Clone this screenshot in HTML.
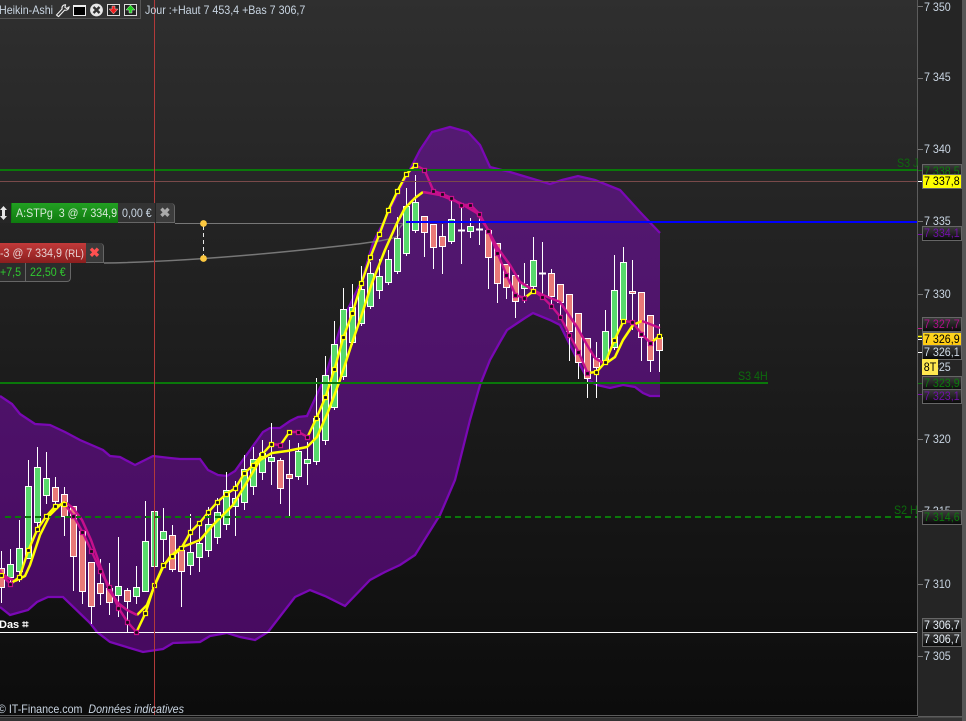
<!DOCTYPE html>
<html><head><meta charset="utf-8"><title>Chart</title>
<style>
html,body{margin:0;padding:0;background:#1a1a1a}
#p{position:relative;width:966px;height:721px;overflow:hidden;font:12px "Liberation Sans",sans-serif;color:#c9d5e2;
background:linear-gradient(#2f2f2f 0,#262626 170px,#1b1b1b 400px,#0c0c0c 715px)}
#p div{position:absolute;white-space:nowrap}
#p span{display:inline-block;transform:scaleX(.89);transform-origin:0 50%}
svg{position:absolute;left:0;top:0}
.ax{left:924px;height:14px;line-height:14px}
.b{left:922px;width:37px;height:13px;line-height:13px;border:1px solid #666;padding-left:1px;background:linear-gradient(#3c3c3c,#0a0a0a)}
</style></head><body><div id="p">

<svg width="966" height="721" viewBox="0 0 966 721">
<defs><linearGradient id="bf" x1="0" y1="0" x2="0" y2="1"><stop offset="0" stop-color="#541a72"/><stop offset="1" stop-color="#470a60"/></linearGradient></defs>

<path fill="url(#bf)" d="M0 396L12 404 20 414 35 424 50 425 65 432 80 440 103 450 110 456 120 457 135 465 147 459 153 456 170 458 180 459 200 459 208 470 218 475 227 476 235 471 263 432 270 428 280 428 290 421 298 417 307 416 325 377 343 319 362 280 373 243 403 183 420 150 432 132 450 127 468 132 480 145 490 167 510 172 530 178 550 184 562 180 578 176 595 180 620 190 640 212 660 233V396H650L643 393 635 387 623 385 610 388 597 385 588 380 580 365 560 325 550 320 533 313 525 318 507 330 500 342 490 360 480 385 470 420 455 480 440 515 415 555 400 565 385 572 370 580 345 606 325 596 310 590 295 597 268 632 255 640 240 637 227 633 210 636 200 642 173 643 163 649 143 652 110 642 97 632 90 623 63 597 48 597 37 602 28 610 10 615 0 607z"/>
<path fill="none" stroke="#7a08b4" stroke-width="2.3" d="M0 396L12 404 20 414 35 424 50 425 65 432 80 440 103 450 110 456 120 457 135 465 147 459 153 456 170 458 180 459 200 459 208 470 218 475 227 476 235 471 263 432 270 428 280 428 290 421 298 417 307 416 325 377 343 319 362 280 373 243 403 183 420 150 432 132 450 127 468 132 480 145 490 167 510 172 530 178 550 184 562 180 578 176 595 180 620 190 640 212 660 233"/>
<path fill="none" stroke="#7a08b4" stroke-width="2.3" d="M660 396H650L643 393 635 387 623 385 610 388 597 385 588 380 580 365 560 325 550 320 533 313 525 318 507 330 500 342 490 360 480 385 470 420 455 480 440 515 415 555 400 565 385 572 370 580 345 606 325 596 310 590 295 597 268 632 255 640 240 637 227 633 210 636 200 642 173 643 163 649 143 652 110 642 97 632 90 623 63 597 48 597 37 602 28 610 10 615 0 607"/>

<path fill="none" stroke="#777" stroke-width="1" d="M175 223.5H406"/>
<path fill="none" stroke="#777" stroke-width="1.5" d="M104 263C170 262 250 256 340 246S385 235 405 223"/>

<path fill="none" stroke="#fff" stroke-width="1" d="M1.5 551V603M10.5 549V582M19.5 520V582M28.5 460V559M37.5 447V527M46.5 452V504M55.5 477V507M64.5 487V536M73.5 506V591M82.5 531V604M91.5 562V624M100.5 559V605M109.5 563V615M118.5 537V617M127.5 588V633M136.5 566V604M145.5 501V592M154.5 494V570M163.5 508V562M172.5 525V572M181.5 550V607M190.5 514V575M199.5 525V572M208.5 507V557M217.5 498V544M226.5 472V530M235.5 481V536M244.5 455V510M253.5 447V495M262.5 440V480M271.5 423V485M280.5 458V504M289.5 440V517M298.5 443V480M307.5 442V485M316.5 378V465M325.5 356V445M334.5 321V410M343.5 288V380M352.5 284V345M361.5 266V326M370.5 262V309M379.5 259V299M388.5 250V285M397.5 217V274M406.5 188V256M415.5 175V233M424.5 216V257M433.5 224V269M442.5 224V274M451.5 200V244M461.5 208V264M470.5 218V238M479.5 217V245M488.5 230V289M497.5 243V303M506.5 264V299M515.5 275V318M524.5 263V303M533.5 237V290M542.5 242V297M551.5 269V305M560.5 284V320M569.5 294V361M578.5 313V379M587.5 338V398M596.5 342V398M605.5 310V364M614.5 255V350M623.5 247V322M632.5 260V330M641.5 292V361M650.5 315V372M659.5 324V372"/>
<path fill="none" stroke="#fff" stroke-width="2" d="M458 230.5h7M476 229.5h7M539 273.5h7"/>

<path fill="#58d96c" stroke="#fff" stroke-width="1" d="M7.5 564.5h6v13h-6zM16.5 548.5h6v23h-6zM25.5 486.5h6v72h-6zM34.5 467.5h6v55h-6zM43.5 478.5h6v17h-6zM115.5 586.5h6v9h-6zM133.5 587.5h6v9h-6zM142.5 541.5h6v50h-6zM151.5 511.5h6v55h-6zM160.5 531.5h6v8h-6zM187.5 552.5h6v13h-6zM196.5 543.5h6v14h-6zM205.5 524.5h6v26h-6zM214.5 512.5h6v25h-6zM223.5 490.5h6v34h-6zM232.5 498.5h6v8h-6zM241.5 469.5h6v33h-6zM250.5 459.5h6v27h-6zM259.5 453.5h6v19h-6zM268.5 457.5h6v4h-6zM295.5 451.5h6v25h-6zM304.5 459.5h6v4h-6zM313.5 418.5h6v43h-6zM322.5 375.5h6v65h-6zM331.5 344.5h6v63h-6zM340.5 309.5h6v67h-6zM349.5 307.5h6v35h-6zM358.5 289.5h6v34h-6zM367.5 273.5h6v33h-6zM376.5 276.5h6v14h-6zM385.5 259.5h6v23h-6zM394.5 238.5h6v33h-6zM403.5 206.5h6v47h-6zM412.5 202.5h6v28h-6zM448.5 219.5h6v22h-6zM467.5 226.5h6v5h-6zM521.5 284.5h6v4h-6zM530.5 260.5h6v26h-6zM602.5 331.5h6v30h-6zM611.5 290.5h6v57h-6zM620.5 262.5h6v57h-6z"/>
<path fill="#e97a78" stroke="#fff" stroke-width="1" d="M-1.5 568.5h6v19h-6zM52.5 487.5h6v14h-6zM61.5 494.5h6v22h-6zM70.5 506.5h6v50h-6zM79.5 531.5h6v60h-6zM88.5 562.5h6v44h-6zM97.5 583.5h6v10h-6zM106.5 588.5h6v14h-6zM124.5 590.5h6v11h-6zM169.5 535.5h6v34h-6zM178.5 550.5h6v21h-6zM277.5 460.5h6v28h-6zM286.5 474.5h6v4h-6zM421.5 216.5h6v16h-6zM430.5 224.5h6v23h-6zM439.5 236.5h6v10h-6zM485.5 230.5h6v27h-6zM494.5 243.5h6v40h-6zM503.5 264.5h6v23h-6zM512.5 275.5h6v26h-6zM548.5 273.5h6v23h-6zM557.5 284.5h6v18h-6zM566.5 294.5h6v37h-6zM575.5 313.5h6v49h-6zM584.5 338.5h6v40h-6zM593.5 358.5h6v9h-6zM629.5 291.5h6v2h-6zM638.5 292.5h6v45h-6zM647.5 315.5h6v45h-6zM656.5 337.5h6v13h-6z"/>

<!-- slow line -->
<path fill="none" stroke="#ffff00" stroke-width="2.5" stroke-linejoin="round" d="M15 581L25 576 30 565 40 535 50 515 60 505 65 502M137 615L147 605 154 587 163 567 170 557 180 548 200 540 213 525 233 505 250 477 260 460 272 453 287 451 307 447 317 437 328 412 340 380 353 340 360 320 372 283 385 250 397 223 405 208 415 198 423 192M605 364L615 357 623 340 633 325 642 321"/>
<path fill="none" stroke="#c6108c" stroke-width="2.5" stroke-linejoin="round" d="M0 572L8 578 15 581M65 502L73 508 82 520 91 540 100 565 109 590 118 603 127 610 137 615M423 192L440 195 460 203 477 213 487 228 497 247 510 265 520 282 533 290 543 295 560 302 577 327 587 345 595 358 605 364M642 321L660 328"/>

<!-- fast line -->
<path fill="none" stroke="#ffff00" stroke-width="2.4" d="M10.5 584L19.5 577 28.5 550 37.5 529 46.5 516 55.5 506 64.5 504M136.5 632L145.5 613 154.5 585 163.5 565 172.5 556 181.5 548 190.5 532 199.5 523 208.5 512 217.5 502 226.5 494 235.5 488 244.5 473 253.5 465 262.5 454 271.5 444M280.5 445L289.5 432M307.5 437L316.5 418 325.5 397 334.5 369 343.5 337 352.5 313 361.5 283 370.5 257 379.5 234 388.5 210 397.5 191 406.5 174 415.5 165M524.5 298L533.5 291M587.5 373L596.5 372 605.5 362 614.5 340 623.5 321M650.5 343L659.5 336"/>
<path fill="none" stroke="#c6108c" stroke-width="2.4" d="M0 570L1.5 575 10.5 584M64.5 504L73.5 516 82.5 532 91.5 551 100.5 571 109.5 587 118.5 608 127.5 622 136.5 632M271.5 444L280.5 445M289.5 432L298.5 432 307.5 437M415.5 165L424.5 170 433.5 191 442.5 194 451.5 198 461.5 205 470.5 205 479.5 214 488.5 231 497.5 253 506.5 275 515.5 295 524.5 298M533.5 291L542.5 297 551.5 306 560.5 317 569.5 335 578.5 352 587.5 373M623.5 321L632.5 322 641.5 334 650.5 343"/>

<!-- horizontal levels -->
<path fill="none" stroke="#7a4a4a" stroke-width="1" d="M0 181.5H917"/>
<path fill="none" stroke="#0a780a" stroke-width="2" d="M0 170H917M0 383H768"/>
<path fill="none" stroke="#0000ff" stroke-width="2" d="M406 222H917"/>
<path fill="none" stroke="#0a780a" stroke-width="2" stroke-dasharray="6 4" d="M5 517H917"/>
<path fill="none" stroke="#fff" stroke-width="1" d="M0 632.5H917"/>

<!-- markers -->
<g transform="translate(-.5 0)">
<path fill="#140a18" stroke="#ffff00" stroke-width="1.2" d="M0 573.5h4v4h-4zM18 575.5h4v4h-4zM27 548.5h4v4h-4zM36 527.5h4v4h-4zM45 514.5h4v4h-4zM54 504.5h4v4h-4zM63 502.5h4v4h-4zM144 611.5h4v4h-4zM153 583.5h4v4h-4zM162 563.5h4v4h-4zM171 554.5h4v4h-4zM180 546.5h4v4h-4zM189 530.5h4v4h-4zM198 521.5h4v4h-4zM207 510.5h4v4h-4zM216 500.5h4v4h-4zM225 492.5h4v4h-4zM234 486.5h4v4h-4zM243 471.5h4v4h-4zM252 463.5h4v4h-4zM261 452.5h4v4h-4zM270 442.5h4v4h-4zM288 430.5h4v4h-4zM315 416.5h4v4h-4zM324 395.5h4v4h-4zM333 367.5h4v4h-4zM342 335.5h4v4h-4zM351 311.5h4v4h-4zM360 281.5h4v4h-4zM369 255.5h4v4h-4zM378 232.5h4v4h-4zM387 208.5h4v4h-4zM396 189.5h4v4h-4zM405 172.5h4v4h-4zM414 163.5h4v4h-4zM532 289.5h4v4h-4zM595 370.5h4v4h-4zM604 360.5h4v4h-4zM613 338.5h4v4h-4zM622 319.5h4v4h-4zM658 334.5h4v4h-4z"/>
<path fill="#140a18" stroke="#c6108c" stroke-width="1.2" d="M9 582.5h4v4h-4zM72 514.5h4v4h-4zM81 530.5h4v4h-4zM90 549.5h4v4h-4zM99 569.5h4v4h-4zM108 585.5h4v4h-4zM117 606.5h4v4h-4zM126 620.5h4v4h-4zM135 630.5h4v4h-4zM279 443.5h4v4h-4zM297 430.5h4v4h-4zM306 435.5h4v4h-4zM423 168.5h4v4h-4zM432 189.5h4v4h-4zM441 192.5h4v4h-4zM450 196.5h4v4h-4zM460 203.5h4v4h-4zM469 203.5h4v4h-4zM478 212.5h4v4h-4zM487 229.5h4v4h-4zM496 251.5h4v4h-4zM505 273.5h4v4h-4zM514 293.5h4v4h-4zM523 296.5h4v4h-4zM541 295.5h4v4h-4zM550 304.5h4v4h-4zM559 315.5h4v4h-4zM568 333.5h4v4h-4zM577 350.5h4v4h-4zM586 371.5h4v4h-4zM631 320.5h4v4h-4zM640 332.5h4v4h-4zM649 341.5h4v4h-4z"/>
</g>

<!-- crosshair -->
<path stroke="#b23a3a" stroke-width="1" d="M154.5 0V715"/>

<!-- order connectors -->
<path fill="none" stroke="#e8e8e8" stroke-width="1" stroke-dasharray="4 3" d="M203.5 226V256"/>
<circle cx="203.5" cy="223.5" r="3.4" fill="#fcc840"/><circle cx="203.5" cy="258.5" r="3.4" fill="#fcc840"/>

<!-- right panel -->
<rect x="918" y="0" width="44" height="716" fill="#252525"/>
<rect x="962" y="0" width="4" height="721" fill="#565656"/>
<path stroke="#5c5c5c" stroke-width="1" fill="none" d="M917.5 0V716M0 715.5H917.5"/>
<path stroke="#777" stroke-width="1" fill="none" d="M918 6.5h5M918 78.5h5M918 149.5h5M918 221.5h5M918 294.5h5M918 439.5h5M918 511.5h5M918 584.5h5M918 656.5h5"/>
<path stroke-width="1" fill="none" stroke="#fff" d="M918 181.5h4M918 339.5h4M918 352.5h4"/>
<path stroke-width="1.5" fill="none" stroke="#ff0" d="M918 336.5h4"/>
<path stroke-width="1" fill="none" stroke="#c6108c" d="M918 328.5h4"/>
<path stroke-width="1" fill="none" stroke="#7a08b0" d="M918 234.5h4M918 394.5h4"/>
<path stroke-width="1" fill="none" stroke="#0a780a" d="M918 383.5h4M918 170.5h4"/>

<!-- footer -->
<rect x="0" y="717" width="962" height="4" fill="#333"/>
<rect x="0" y="717" width="962" height="1" fill="#484848"/>
<rect x="918" y="716" width="44" height="1" fill="#5c5c5c"/>
</svg>

<!-- toolbar -->
<div style="left:0;top:0;width:140px;height:18px;background:#323232;border:solid #555;border-width:0 1px 1px 0"></div>
<div style="left:-1px;top:3px;line-height:14px"><span>Heikin-Ashi</span></div>
<svg width="140" height="18" viewBox="0 0 140 18" style="z-index:2">
<path fill="none" stroke="#f0f0f0" stroke-width="1.1" d="M57 15.500l1.600 1 6-6.400c2 .6 4.200-.7 4.400-3.100l-2.200 1.500-1.900-1.200.6-2.500c-2.500-.2-4 2-3.400 4.200L56.500 15z"/>
<rect x="73.500" y="5.500" width="12" height="10" fill="#000" stroke="#eee"/><rect x="74" y="5" width="11" height="2" fill="#eee"/>
<circle cx="96.500" cy="10" r="6.400" fill="#e8e8e8"/><path stroke="#333" stroke-width="2.400" d="M93.500 7l6 6M99.500 7l-6 6"/>
<rect x="107.500" y="4.500" width="12" height="11" fill="#222" stroke="#ddd"/><path fill="#f02020" stroke="#fff" stroke-width=".4" d="M109 9h3V6h3v3h3l-4.500 5z"/>
<rect x="124.500" y="4.500" width="12" height="11" fill="#222" stroke="#ddd"/><path fill="#20d020" stroke="#fff" stroke-width=".4" d="M126 10h3v3h3v-3h3l-4.500-5z"/>
</svg>
<div style="left:145px;top:3px;line-height:14px"><span>Jour :+Haut 7 453,4 +Bas 7 306,7</span></div>

<!-- order tags -->
<div style="left:0;top:203px;width:11px;height:20px;background:#262626;border-right:1px solid #0f7a0f"></div>
<svg width="12" height="240" viewBox="0 0 12 240" style="z-index:2"><path fill="#e8e8e8" d="M3.500 206l3.500 4H5v6h2l-3.500 4L0 216h2v-6H0z"/></svg>
<div style="left:12px;top:203px;width:106px;height:20px;line-height:20px;background:linear-gradient(#22a022,#0f7a0f);color:#d8e8d8"><span style="margin-left:4px">A:STPg&nbsp; 3 @ 7 334,9</span></div>
<div style="left:118px;top:203px;width:37px;height:19px;line-height:20px;background:#333;border-bottom:1px solid #666"><span style="margin-left:4px">0,00 €</span></div>
<div style="left:156px;top:203px;width:18px;height:19px;background:#3c3c3c;border:solid #666;border-width:0 1px 1px 0;border-top-right-radius:4px;text-align:center;color:#aaa;font-weight:bold;font-size:13px;line-height:20px">✖</div>
<div style="left:0;top:243px;width:86px;height:20px;line-height:20px;background:linear-gradient(#c23a3a,#8a1e1e);color:#e6d0d0"><span>-3 @ 7 334,9 <b style="font-weight:normal;font-size:11px">(RL)</b></span></div>
<div style="left:86px;top:243px;width:17px;height:19px;background:#3a3a3a;border:solid #666;border-width:0 1px 1px 0;border-top-right-radius:4px;text-align:center;color:#ff5050;font-weight:bold;font-size:13px;line-height:20px">✖</div>
<div style="left:0;top:263px;width:25px;height:18px;line-height:18px;background:#2c2c2c;border:solid #666;border-width:0 1px 1px 0;color:#30c830"><span>+7,5</span></div>
<div style="left:26px;top:263px;width:44px;height:18px;line-height:18px;background:#2c2c2c;border:solid #666;border-width:0 1px 1px 0;border-bottom-right-radius:4px;color:#30c830"><span style="margin-left:4px">22,50 €</span></div>

<!-- level labels -->
<div style="left:897px;top:156px;color:#0c6a0c"><span>S3 J</span></div>
<div style="left:738px;top:369px;color:#0c6a0c"><span>S3 4H</span></div>
<div style="left:894px;top:503px;color:#0c6a0c"><span>S2 H</span></div>

<!-- axis -->
<div class="ax" style="top:0"><span>7 350</span></div>
<div class="ax" style="top:70px"><span>7 345</span></div>
<div class="ax" style="top:142px"><span>7 340</span></div>
<div class="ax" style="top:214px"><span>7 335</span></div>
<div class="ax" style="top:287px"><span>7 330</span></div>
<div class="ax" style="top:360px"><span>7 325</span></div>
<div class="ax" style="top:432px"><span>7 320</span></div>
<div class="ax" style="top:504px"><span>7 315</span></div>
<div class="ax" style="top:577px"><span>7 310</span></div>
<div class="ax" style="top:649px"><span>7 305</span></div>

<div class="b" style="top:164px;color:#0c7a0c"><span>7 338,5</span></div>
<div class="b" style="top:174px;background:#ffff00;color:#000"><span>7 337,8</span></div>
<div class="b" style="top:226px;color:#7010a8"><span>7 334,1</span></div>
<div class="b" style="top:317px;color:#b0108a"><span>7 327,7</span></div>
<div class="b" style="top:332px;background:linear-gradient(#ffd820,#ffc810);color:#000"><span>7 326,9</span></div>
<div class="b" style="top:345px;color:#d0dce8"><span>7 326,1</span></div>
<div style="left:922px;top:359px;width:16px;height:16px;line-height:16px;background:#ffe850;color:#000;text-align:center"><span style="transform-origin:50% 50%">8T</span></div>
<div class="b" style="top:376px;color:#0c7a0c"><span>7 323,9</span></div>
<div class="b" style="top:389px;color:#7010a8"><span>7 323,1</span></div>
<div class="b" style="top:510px;color:#0c7a0c"><span>7 314,6</span></div>
<div class="b" style="top:618px;color:#e6eef6"><span>7 306,7</span></div>
<div class="b" style="top:632px;color:#e6eef6"><span>7 306,7</span></div>

<div style="left:-1px;top:618px;color:#fff;font-weight:bold;font-size:11px;line-height:14px">Das ⌗</div>
<div style="left:-2px;top:702px;line-height:14px"><span>© IT-Finance.com&nbsp; <i>Données indicatives</i></span></div>

</div></body></html>
